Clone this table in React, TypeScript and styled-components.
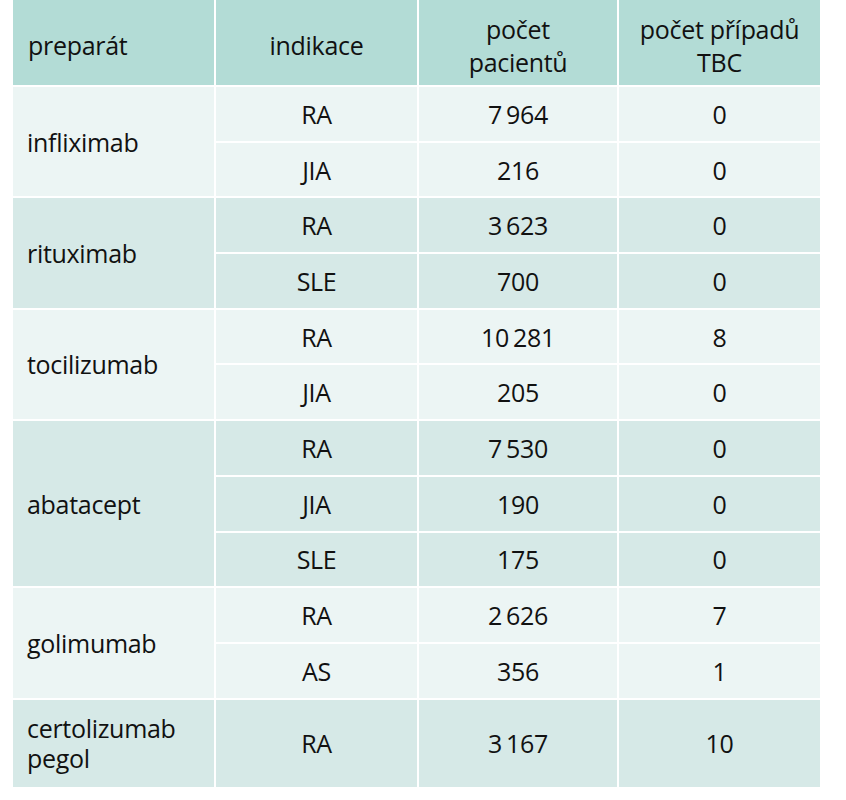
import React from "react";
import styled, { createGlobalStyle } from "styled-components";

const Global = createGlobalStyle`
  html, body { margin: 0; padding: 0; background: #ffffff; }
  body { font-family: "Open Sans", "Noto Sans", sans-serif; color: #111111; }
`;

const Page = styled.div`
  padding: 0 0 0 13px;
`;

const Grid = styled.div`
  display: grid;
  grid-template-columns: 201px 201px 198px 201px;
  grid-template-rows: 85px repeat(11, 53.7px) 87px;
  gap: 2px;
  width: 807px;
  background: #ffffff;
`;

const HeadCell = styled.div<{ $left?: boolean }>`
  background: #b3dcd6;
  display: flex;
  align-items: center;
  justify-content: ${(p) => (p.$left ? "flex-start" : "center")};
  text-align: ${(p) => (p.$left ? "left" : "center")};
  padding: ${(p) => (p.$left ? "6px 0 0 15px" : "6px 2px 0")};
  font-size: 25px;
  line-height: 33px;
  letter-spacing: -0.3px;
`;

const Cell = styled.div<{ $dark: boolean; $left?: boolean; $span?: number }>`
  background: ${(p) => (p.$dark ? "#d6e9e7" : "#ecf5f4")};
  grid-row: ${(p) => (p.$span ? `span ${p.$span}` : "auto")};
  display: flex;
  align-items: center;
  justify-content: ${(p) => (p.$left ? "flex-start" : "center")};
  padding: ${(p) => (p.$left ? "0 0 0 14px" : "0")};
  font-size: 25px;
  line-height: 30px;
  letter-spacing: -0.3px;
`;

type Row = { ind: string; n: string; tbc: string };
type Group = { name: React.ReactNode; rows: Row[] };

const T = "\u2009";

const groups: Group[] = [
  { name: "infliximab", rows: [{ ind: "RA", n: `7${T}964`, tbc: "0" }, { ind: "JIA", n: "216", tbc: "0" }] },
  { name: "rituximab", rows: [{ ind: "RA", n: `3${T}623`, tbc: "0" }, { ind: "SLE", n: "700", tbc: "0" }] },
  { name: "tocilizumab", rows: [{ ind: "RA", n: `10${T}281`, tbc: "8" }, { ind: "JIA", n: "205", tbc: "0" }] },
  {
    name: "abatacept",
    rows: [
      { ind: "RA", n: `7${T}530`, tbc: "0" },
      { ind: "JIA", n: "190", tbc: "0" },
      { ind: "SLE", n: "175", tbc: "0" },
    ],
  },
  { name: "golimumab", rows: [{ ind: "RA", n: `2${T}626`, tbc: "7" }, { ind: "AS", n: "356", tbc: "1" }] },
  {
    name: (
      <>
        certolizumab
        <br />
        pegol
      </>
    ),
    rows: [{ ind: "RA", n: `3${T}167`, tbc: "10" }],
  },
];

export default function App() {
  return (
    <>
      <Global />
      <Page>
        <Grid>
          <HeadCell $left>preparát</HeadCell>
          <HeadCell>indikace</HeadCell>
          <HeadCell>
            počet
            <br />
            pacientů
          </HeadCell>
          <HeadCell>
            počet případů
            <br />
            TBC
          </HeadCell>
          {groups.map((g, gi) => {
            const dark = gi % 2 === 1;
            return (
              <React.Fragment key={gi}>
                <Cell $dark={dark} $left $span={g.rows.length}>
                  <span>{g.name}</span>
                </Cell>
                {g.rows.map((r, ri) => (
                  <React.Fragment key={ri}>
                    <Cell $dark={dark}>{r.ind}</Cell>
                    <Cell $dark={dark}>{r.n}</Cell>
                    <Cell $dark={dark}>{r.tbc}</Cell>
                  </React.Fragment>
                ))}
              </React.Fragment>
            );
          })}
        </Grid>
      </Page>
    </>
  );
}
